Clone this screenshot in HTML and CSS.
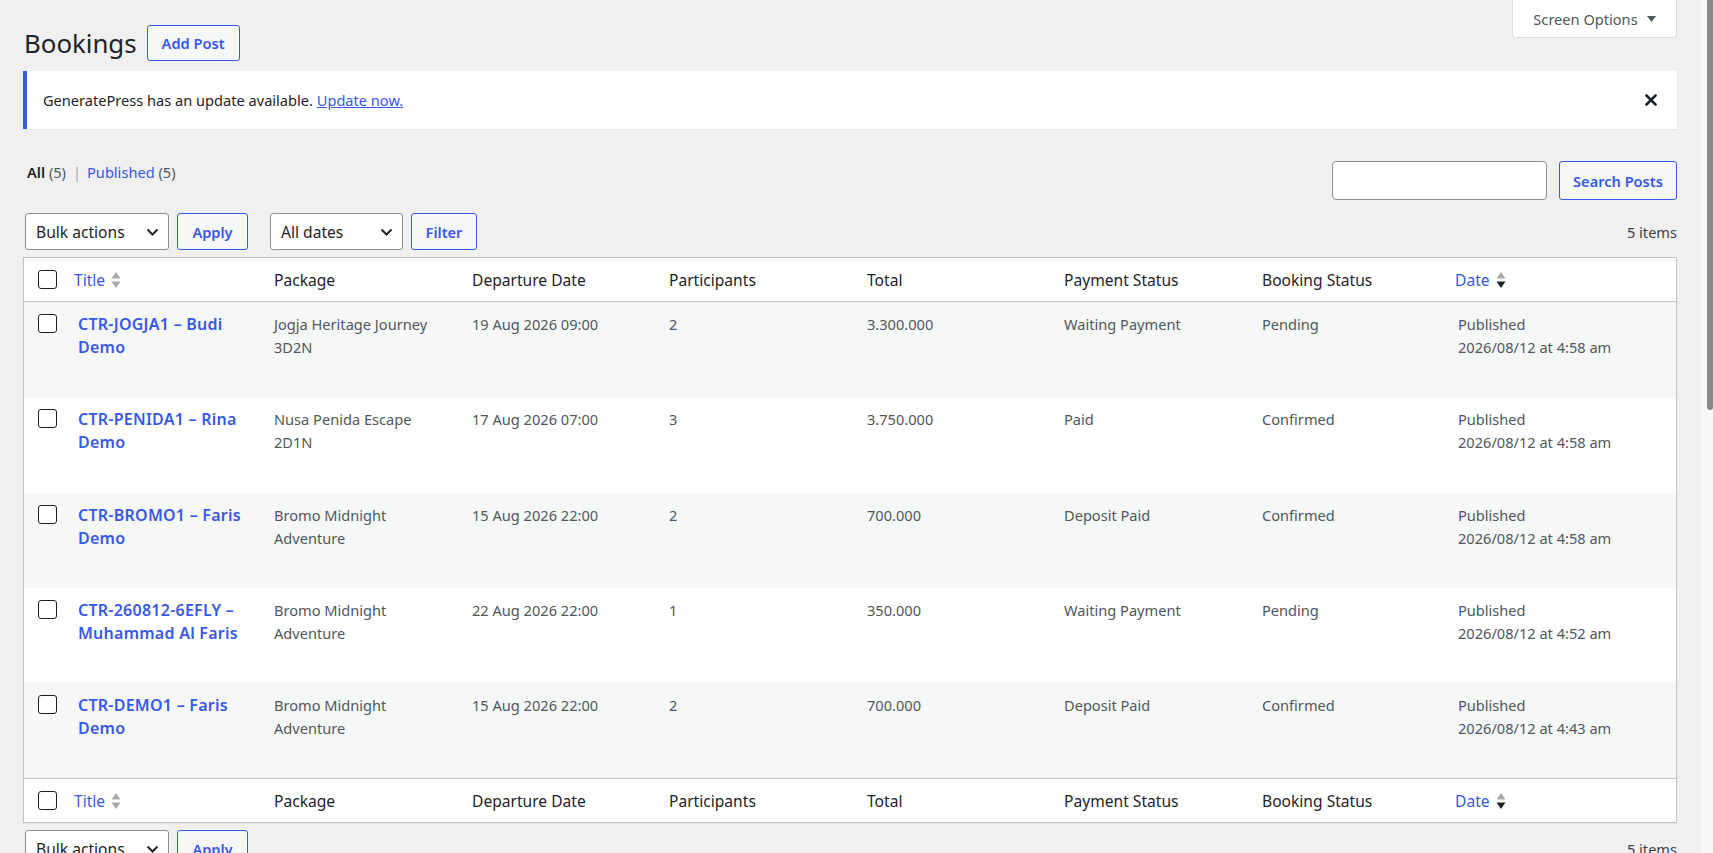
FILE: index.html
```html
<!DOCTYPE html>
<html lang="en">

<head>
    <meta charset="UTF-8">
    <meta name="viewport" content="width=device-width, initial-scale=1.0">
    <title>Bookings</title>
    <link rel="stylesheet" href="styles.css">
</head>

<body>
    <div class="screen">
        <div class="wrap">
            <div class="top-row">
                <div class="heading">
                    <h1>Bookings</h1>
                    <a href="#" class="button">Add Post</a>
                </div>
                <button class="screen-options">Screen Options
                    <svg width="9" height="6" viewBox="0 0 9 6"><polygon points="0,0 9,0 4.5,6" fill="#50575e"/></svg>
                </button>
            </div>

            <!-- update notice -->
            <div class="notice">
                <p>GeneratePress has an update available. <a href="#">Update now.</a></p>
                <button class="notice-dismiss" aria-label="Dismiss">
                    <svg width="12" height="12" viewBox="0 0 12 12"><path d="M1.5 1.5 L10.5 10.5 M10.5 1.5 L1.5 10.5" stroke="#1d2327" stroke-width="2.6" stroke-linecap="round"/></svg>
                </button>
            </div>

            <div class="views-row">
                <ul class="subsubsub">
                    <li><a href="#" class="current">All <span class="count">(5)</span></a><span class="sep">|</span></li>
                    <li><a href="#">Published <span class="count">(5)</span></a></li>
                </ul>
                <div class="search-box">
                    <input type="search">
                    <button class="button">Search Posts</button>
                </div>
            </div>

            <div class="tablenav">
                <div class="actions">
                    <div class="select bulk">Bulk actions
                        <svg width="13" height="8" viewBox="0 0 13 8"><path d="M1.5 1.5 L6.5 6.5 L11.5 1.5" stroke="#1d2327" stroke-width="2" fill="none"/></svg>
                    </div>
                    <button class="button">Apply</button>
                </div>
                <div class="actions">
                    <div class="select dates">All dates
                        <svg width="13" height="8" viewBox="0 0 13 8"><path d="M1.5 1.5 L6.5 6.5 L11.5 1.5" stroke="#1d2327" stroke-width="2" fill="none"/></svg>
                    </div>
                    <button class="button">Filter</button>
                </div>
                <div class="displaying-num">5 items</div>
            </div>

            <table class="list-table">
                <thead>
                    <tr>
                        <td class="check-column"><span class="cb"></span></td>
                        <th class="col-title sortable"><a href="#">Title
                            <svg width="10" height="18" viewBox="0 0 10 18"><polygon points="5,1 9.5,7.5 0.5,7.5" fill="#a7aaad"/><polygon points="0.5,10.5 9.5,10.5 5,17" fill="#a7aaad"/></svg></a></th>
                        <th class="col-package">Package</th>
                        <th class="col-departure">Departure Date</th>
                        <th class="col-participants">Participants</th>
                        <th class="col-total">Total</th>
                        <th class="col-payment">Payment Status</th>
                        <th class="col-booking">Booking Status</th>
                        <th class="col-date sortable"><a href="#">Date
                            <svg width="10" height="18" viewBox="0 0 10 18"><polygon points="5,1 9.5,7.5 0.5,7.5" fill="#a7aaad"/><polygon points="0.5,10.5 9.5,10.5 5,17" fill="#1d2327"/></svg></a></th>
                    </tr>
                </thead>
                <tbody>
                    <tr class="alt">
                        <td class="check-column"><span class="cb"></span></td>
                        <td class="col-title"><a href="#">CTR-JOGJA1 – Budi Demo</a></td>
                        <td class="col-package">Jogja Heritage Journey 3D2N</td>
                        <td>19 Aug 2026 09:00</td>
                        <td>2</td>
                        <td>3.300.000</td>
                        <td>Waiting Payment</td>
                        <td>Pending</td>
                        <td>Published<br>2026/08/12 at 4:58 am</td>
                    </tr>
                    <tr>
                        <td class="check-column"><span class="cb"></span></td>
                        <td class="col-title"><a href="#">CTR-PENIDA1 – Rina Demo</a></td>
                        <td class="col-package">Nusa Penida Escape 2D1N</td>
                        <td>17 Aug 2026 07:00</td>
                        <td>3</td>
                        <td>3.750.000</td>
                        <td>Paid</td>
                        <td>Confirmed</td>
                        <td>Published<br>2026/08/12 at 4:58 am</td>
                    </tr>
                    <tr class="alt">
                        <td class="check-column"><span class="cb"></span></td>
                        <td class="col-title"><a href="#">CTR-BROMO1 – Faris Demo</a></td>
                        <td class="col-package">Bromo Midnight Adventure</td>
                        <td>15 Aug 2026 22:00</td>
                        <td>2</td>
                        <td>700.000</td>
                        <td>Deposit Paid</td>
                        <td>Confirmed</td>
                        <td>Published<br>2026/08/12 at 4:58 am</td>
                    </tr>
                    <tr>
                        <td class="check-column"><span class="cb"></span></td>
                        <td class="col-title"><a href="#">CTR-260812-6EFLY – Muhammad Al Faris</a></td>
                        <td class="col-package">Bromo Midnight Adventure</td>
                        <td>22 Aug 2026 22:00</td>
                        <td>1</td>
                        <td>350.000</td>
                        <td>Waiting Payment</td>
                        <td>Pending</td>
                        <td>Published<br>2026/08/12 at 4:52 am</td>
                    </tr>
                    <tr class="alt">
                        <td class="check-column"><span class="cb"></span></td>
                        <td class="col-title"><a href="#">CTR-DEMO1 – Faris Demo</a></td>
                        <td class="col-package">Bromo Midnight Adventure</td>
                        <td>15 Aug 2026 22:00</td>
                        <td>2</td>
                        <td>700.000</td>
                        <td>Deposit Paid</td>
                        <td>Confirmed</td>
                        <td>Published<br>2026/08/12 at 4:43 am</td>
                    </tr>
                </tbody>
                <tfoot>
                    <tr>
                        <td class="check-column"><span class="cb"></span></td>
                        <th class="col-title sortable"><a href="#">Title
                            <svg width="10" height="18" viewBox="0 0 10 18"><polygon points="5,1 9.5,7.5 0.5,7.5" fill="#a7aaad"/><polygon points="0.5,10.5 9.5,10.5 5,17" fill="#a7aaad"/></svg></a></th>
                        <th>Package</th>
                        <th>Departure Date</th>
                        <th>Participants</th>
                        <th>Total</th>
                        <th>Payment Status</th>
                        <th>Booking Status</th>
                        <th class="col-date sortable"><a href="#">Date
                            <svg width="10" height="18" viewBox="0 0 10 18"><polygon points="5,1 9.5,7.5 0.5,7.5" fill="#a7aaad"/><polygon points="0.5,10.5 9.5,10.5 5,17" fill="#1d2327"/></svg></a></th>
                    </tr>
                </tfoot>
            </table>

            <div class="tablenav bottom">
                <div class="actions">
                    <div class="select bulk">Bulk actions
                        <svg width="13" height="8" viewBox="0 0 13 8"><path d="M1.5 1.5 L6.5 6.5 L11.5 1.5" stroke="#1d2327" stroke-width="2" fill="none"/></svg>
                    </div>
                    <button class="button">Apply</button>
                </div>
                <div class="displaying-num">5 items</div>
            </div>
        </div>

        <div class="scrollbar"><div class="thumb"></div></div>
    </div>
</body>

</html>
```

FILE: styles.css
```css
* {
    box-sizing: border-box;
}

html,
body {
    margin: 0;
    height: 100%;
    overflow: hidden;
}

body {
    background-color: #f0f0f1;
    color: #3c434a;
    font-family: "Noto Sans", "Open Sans", sans-serif;
    font-size: 14.6px;
}

a {
    color: #3858e9;
    text-decoration: none;
}

.screen {
    display: flex;
    height: 100vh;
}

.wrap {
    flex: 1;
    min-width: 0;
    padding: 0 25px 0 23px;
}

.scrollbar {
    width: 11px;
    background-color: #f8f8f8;
}

.scrollbar .thumb {
    margin-left: 5px;
    height: 410px;
    background-color: #8a8a8a;
    border-radius: 0 0 3px 3px;
}

/* heading */
.top-row {
    display: flex;
    justify-content: space-between;
    align-items: flex-start;
}

.heading {
    display: flex;
    align-items: center;
    gap: 10px;
    padding-top: 25px;
}

.heading h1 {
    margin: 0 0 0 1px;
    font-size: 25.8px;
    font-weight: 400;
    color: #1d2327;
    line-height: 36px;
}

.button {
    display: inline-flex;
    align-items: center;
    justify-content: center;
    height: 37px;
    padding: 0 12px;
    border: 1px solid #3858e9;
    border-radius: 3px;
    background-color: #f6f7f7;
    color: #3858e9;
    font-family: inherit;
    font-size: 14.6px;
    font-weight: 600;
    cursor: pointer;
}

.heading .button {
    height: 36px;
    width: 93px;
}

.screen-options {
    display: flex;
    align-items: center;
    justify-content: center;
    gap: 9px;
    width: 165px;
    height: 38px;
    background-color: #fff;
    border: 1px solid #dcdcde;
    border-top: none;
    border-radius: 0 0 4px 4px;
    color: #50575e;
    font-family: inherit;
    font-size: 14.6px;
}

/* notice */
.notice {
    display: flex;
    align-items: center;
    justify-content: space-between;
    height: 58px;
    margin-top: 10px;
    padding: 0 20px 0 16px;
    background-color: #fff;
    border-left: 4px solid #3858e9;
    box-shadow: 0 1px 1px rgba(0, 0, 0, 0.04);
}

.notice p {
    margin: 0;
    color: #1d2327;
}

.notice p a {
    text-decoration: underline;
}

.notice-dismiss {
    display: flex;
    background: none;
    border: none;
    padding: 0;
    cursor: pointer;
}

/* views + search */
.views-row {
    display: flex;
    justify-content: space-between;
    align-items: flex-start;
    margin-top: 32px;
}

.subsubsub {
    list-style: none;
    margin: 0;
    padding: 0 0 0 4px;
    display: flex;
    line-height: 23px;
    color: #50575e;
}

.subsubsub a .count {
    color: #50575e;
}

.subsubsub a.current {
    color: #1d2327;
    font-weight: 600;
}

.subsubsub a.current .count {
    font-weight: 400;
}

.subsubsub .sep {
    color: #a7aaad;
    margin: 0 6px 0 7px;
}

.search-box {
    display: flex;
    gap: 12px;
}

.search-box input {
    width: 215px;
    height: 39px;
    border: 1px solid #8c8f94;
    border-radius: 4px;
    background-color: #fff;
}

.search-box .button {
    height: 39px;
    width: 118px;
}

/* tablenav */
.tablenav {
    display: flex;
    align-items: center;
    gap: 22px;
    margin-top: 13px;
    padding-left: 2px;
}

.tablenav .actions {
    display: flex;
    gap: 8px;
}

.select {
    display: flex;
    align-items: center;
    justify-content: space-between;
    height: 37px;
    padding: 0 9px 0 10px;
    background-color: #fff;
    border: 1px solid #8c8f94;
    border-radius: 3px;
    color: #1d2327;
    font-size: 15.6px;
}

.select.bulk {
    width: 144px;
}

.select.dates {
    width: 133px;
}

.tablenav .actions .button {
    width: 71px;
}

.tablenav .actions .select.dates + .button {
    width: 66px;
}

.displaying-num {
    margin-left: auto;
    color: #3c434a;
}

.tablenav.bottom {
    margin-top: 7px;
}

/* list table */
.list-table {
    width: 100%;
    table-layout: fixed;
    border-spacing: 0;
    margin-top: 7px;
    background-color: #fff;
    border: 1px solid #c3c4c7;
    box-shadow: 0 1px 1px rgba(0, 0, 0, 0.04);
}

.list-table th,
.list-table thead td,
.list-table tfoot td {
    height: 44px;
    padding: 0 0 0 11px;
    text-align: left;
    font-weight: 400;
    font-size: 15.6px;
    color: #1d2327;
    vertical-align: middle;
}

.list-table thead th,
.list-table thead td {
    border-bottom: 1px solid #c3c4c7;
}

.list-table tfoot th,
.list-table tfoot td {
    border-top: 1px solid #c3c4c7;
}

.list-table .check-column {
    width: 41px;
    padding: 0 0 0 14px;
}

.list-table .col-title {
    width: 198px;
}

.list-table .col-package {
    width: 198px;
}

.list-table .col-departure {
    width: 197px;
}

.list-table .col-participants {
    width: 198px;
}

.list-table .col-total {
    width: 197px;
}

.list-table .col-payment {
    width: 198px;
}

.list-table .col-booking {
    width: 196px;
}

.list-table th.sortable {
    padding-left: 9px;
}

.list-table th.col-date {
    padding-left: 8px;
}

.list-table th.sortable a {
    display: inline-flex;
    align-items: center;
    gap: 6px;
}

.list-table tbody tr {
    height: 95.3px;
}

.list-table tbody tr.alt {
    background-color: #f6f7f7;
}

.list-table tbody td {
    vertical-align: top;
    padding: 11px 11px 0 11px;
    line-height: 23px;
    color: #50575e;
}

.list-table tbody td.check-column {
    padding: 12px 0 0 14px;
}

.list-table tbody td.col-title {
    padding-left: 13px;
    padding-right: 11px;
}

.list-table tbody td.col-title a {
    font-weight: 600;
    font-size: 16px;
    letter-spacing: 0.25px;
}

.list-table tbody td.col-package {
    padding-right: 16px;
}

.cb {
    display: block;
    width: 19px;
    height: 19px;
    border: 1px solid #1e1e1e;
    border-radius: 3px;
    background-color: #fff;
}
```
